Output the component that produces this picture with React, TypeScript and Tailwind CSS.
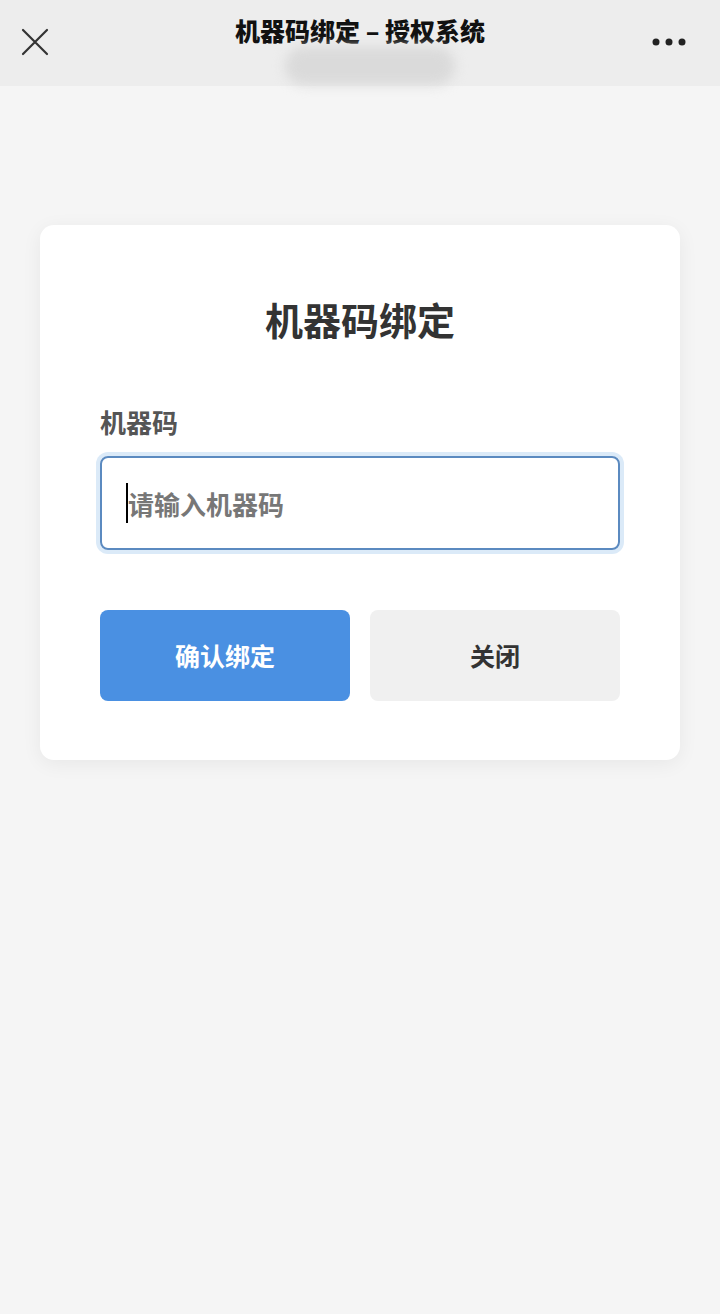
const font = "font-['Noto_Sans_CJK_SC','Noto_Sans',sans-serif]";

function CloseIcon() {
  return (
    <svg width="28" height="28" viewBox="0 0 28 28" fill="none">
      <path d="M2 2L26 26M26 2L2 26" stroke="#333" strokeWidth="2.2" strokeLinecap="round" />
    </svg>
  );
}

function MoreIcon() {
  return (
    <svg width="34" height="8" viewBox="0 0 34 8" fill="#222">
      <circle cx="4" cy="4" r="3.5" />
      <circle cx="17" cy="4" r="3.5" />
      <circle cx="30" cy="4" r="3.5" />
    </svg>
  );
}

export default function App() {
  return (
    <div className={`flex min-h-[1314px] w-full flex-col bg-[#f5f5f5] ${font}`}>
      <header className="grid h-[86px] shrink-0 grid-cols-[1fr_auto_1fr] items-start bg-[#ededed] px-[21px]">
        <div className="mt-[28px]">
          <CloseIcon />
        </div>
        <div className="flex flex-col items-center pt-[12px]">
          <h1 className="text-[25px] font-black leading-[36px] text-[#111]">
            机器码绑定 – 授权系统
          </h1>
          {/* blurred sub-title (domain) */}
          <div className="mt-[-1px] ml-[20px] h-[38px] w-[170px] rounded-full bg-[#dadada] blur-[6px]" />
        </div>
        <div className="mt-[38px] mr-[13px] justify-self-end">
          <MoreIcon />
        </div>
      </header>

      <main className="flex flex-col items-center pt-[139px]">
        <section className="w-[640px] rounded-[14px] bg-white px-[60px] pt-[68px] pb-[59px] shadow-[0_4px_20px_rgba(0,0,0,0.06)]">
          <h2 className="text-center text-[38px] font-bold leading-[52px] text-[#333]">
            机器码绑定
          </h2>

          <label className="mt-[59px] block text-[26px] font-bold leading-[36px] text-[#555]">
            机器码
          </label>
          <div className="mt-[16px] flex h-[94px] items-center rounded-[8px] border-2 border-[#5b8ac0] pl-[24px] shadow-[0_0_0_4px_#dbeaf8]">
            <span className="h-[40px] w-[2px] bg-black" />
            <span className="text-[26px] font-bold text-[#777]">请输入机器码</span>
          </div>

          <div className="mt-[60px] grid grid-cols-2 gap-[20px]">
            <button className="h-[91px] rounded-[8px] bg-[#4a90e2] text-[25px] font-bold text-white">
              确认绑定
            </button>
            <button className="h-[91px] rounded-[8px] bg-[#f0f0f0] text-[25px] font-bold text-[#333]">
              关闭
            </button>
          </div>
        </section>
      </main>
    </div>
  );
}
